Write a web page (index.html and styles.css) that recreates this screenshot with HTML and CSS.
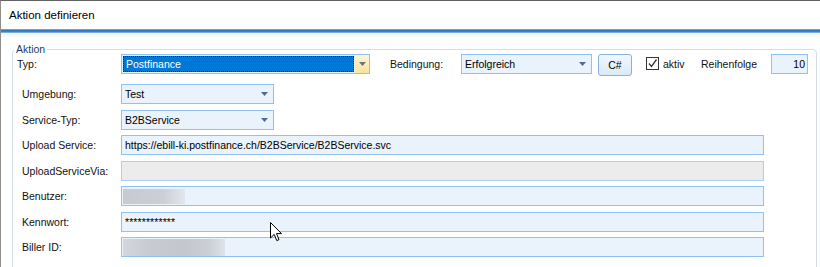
FILE: index.html
```html
<!DOCTYPE html>
<html lang="de">
  <head>
    <meta charset="utf-8">
    <title>Aktion definieren</title>
    <link rel="stylesheet" href="styles.css">
  </head>
  <body>
  <div class="window">
      <div class="titlebar">Aktion definieren</div>
      <div class="band"></div>

      <div class="content">
          <div class="group">
              <span class="legend">Aktion</span>

              <!-- erste Zeile: Typ, Bedingung, C#, aktiv, Reihenfolge -->
              <div class="row-top">
                  <span class="topic topic-typ">Typ:</span>
                  <div class="combo combo-typ">
                      <span class="selection">Postfinance</span>
                      <span class="combo-btn hot">
                          <svg width="7" height="4" viewBox="0 0 7 4"><polygon points="0,0 7,0 3.5,4" fill="#6a7488"/></svg>
                      </span>
                  </div>
                  <span class="topic topic-bed">Bedingung:</span>
                  <div class="combo combo-bed">
                      <span class="combo-text">Erfolgreich</span>
                      <span class="combo-btn">
                          <svg width="7" height="4" viewBox="0 0 7 4"><polygon points="0,0 7,0 3.5,4" fill="#4f6b94"/></svg>
                      </span>
                  </div>
                  <button class="cs-btn">C#</button>
                  <span class="check">
                      <svg width="11" height="11" viewBox="0 0 11 11"><polyline points="2,5.5 4.5,8.5 9.5,1.5" fill="none" stroke="#333" stroke-width="1.3"/></svg>
                  </span>
                  <span class="check-label">aktiv</span>
                  <span class="topic topic-order">Reihenfolge</span>
                  <div class="field field-order">10</div>
              </div>

              <div class="rows">
                  <div class="row">
                      <span class="topic">Umgebung:</span>
                      <div class="combo combo-small">
                          <span class="combo-text">Test</span>
                          <span class="combo-btn">
                              <svg width="7" height="4" viewBox="0 0 7 4"><polygon points="0,0 7,0 3.5,4" fill="#4f6b94"/></svg>
                          </span>
                      </div>
                  </div>
                  <div class="row">
                      <span class="topic">Service-Typ:</span>
                      <div class="combo combo-small">
                          <span class="combo-text">B2BService</span>
                          <span class="combo-btn">
                              <svg width="7" height="4" viewBox="0 0 7 4"><polygon points="0,0 7,0 3.5,4" fill="#4f6b94"/></svg>
                          </span>
                      </div>
                  </div>
                  <div class="row">
                      <span class="topic">Upload Service:</span>
                      <div class="field field-wide">https://ebill-ki.postfinance.ch/B2BService/B2BService.svc</div>
                  </div>
                  <div class="row">
                      <span class="topic">UploadServiceVia:</span>
                      <div class="field field-wide disabled"></div>
                  </div>
                  <div class="row">
                      <span class="topic">Benutzer:</span>
                      <div class="field field-wide field-blur"><span class="blur blur-user"></span></div>
                  </div>
                  <div class="row">
                      <span class="topic">Kennwort:</span>
                      <div class="field field-wide pw">************</div>
                  </div>
                  <div class="row">
                      <span class="topic">Biller ID:</span>
                      <div class="field field-wide field-blur"><span class="blur blur-biller"></span></div>
                  </div>
              </div>
          </div>
      </div>

      <!-- Mauszeiger -->
      <svg class="cursor" width="13" height="20" viewBox="0 0 13 20">
          <path d="M0.5,0.5 L0.5,16 L4.2,12.4 L6.8,18.6 L9,17.6 L6.5,11.6 L11.5,11.6 Z" fill="#fff" stroke="#000" stroke-width="1"/>
      </svg>
  </div>
  </body>
</html>
```

FILE: styles.css
```css
/* Grundeinstellungen */
body {
    margin: 0;
    width: 820px;
    height: 267px;
    overflow: hidden;
    font-family: "Liberation Sans", Arial, sans-serif;
    font-size: 10.5px;
    color: #111;
    background-color: #ffffff;
}

/* Fensterrahmen */
.window {
    position: relative;
    height: 267px;
    border-top: 1px solid #626262;
    border-left: 1px solid #8e8e8e;
    box-sizing: border-box;
}

/* Titelleiste */
.titlebar {
    height: 28px;
    line-height: 28px;
    padding-left: 8px;
    font-size: 11.5px;
    color: #000;
    background-color: #ffffff;
}

/* blaue Linie unter dem Titel */
.band {
    height: 4px;
    background: linear-gradient(#86b6e0, #2f76bb 40%, #3f84c6 70%, #a4c8e8);
}

.content {
    height: 234px;
    background: linear-gradient(#eef3f8, #ffffff 6px);
    overflow: hidden;
}

/* Gruppenrahmen "Aktion" */
.group {
    position: relative;
    margin: 16px 3px 0 11px;
    height: 260px;
    padding-top: 4px;
    border: 1px solid #d3dde6;
    border-radius: 4px 4px 0 0;
    box-sizing: border-box;
}

.legend {
    position: absolute;
    top: -8px;
    left: 1px;
    padding: 0 2px;
    line-height: 14px;
    color: #223d63;
    background-color: #ffffff;
}

/* erste Zeile */
.row-top {
    display: flex;
    align-items: flex-start;
    height: 22px;
    padding-left: 4px;
}

.topic {
    line-height: 20px;
    flex-shrink: 0;
    white-space: nowrap;
}
.topic-typ { width: 104px; }
.topic-bed { width: 71px; margin-left: 20px; }
.topic-order { width: 70px; }

/* Zeilen darunter */
.rows {
    display: grid;
    grid-auto-rows: 20px;
    row-gap: 5.5px;
    margin-top: 8px;
    padding-left: 9px;
}

.row {
    display: flex;
    align-items: center;
}
.row .topic { width: 99px; }

/* Kombinationsfelder */
.combo {
    display: flex;
    height: 20px;
    box-sizing: border-box;
    border: 1px solid #8fc1f3;
    background-color: #eaf2fb;
    flex-shrink: 0;
}
.combo-typ { width: 249px; }
.combo-bed { width: 131px; }
.combo-small { width: 153px; }

.combo-text {
    flex-grow: 1;
    padding-left: 3px;
    line-height: 18px;
    color: #000;
}

.combo-btn {
    width: 13px;
    display: flex;
    align-items: center;
    justify-content: center;
    padding-right: 2px;
}
.combo-btn.hot {
    width: 14px;
    padding-right: 0;
    background: linear-gradient(#fff5d6, #fbe39e);
}

/* markierter Eintrag mit Fokusrahmen */
.selection {
    flex-grow: 1;
    margin: 1px;
    padding-left: 2px;
    line-height: 14px;
    color: #ffffff;
    background-color: #0078d7;
    border: 1px dotted #2a2a2a;
}

/* C# Knopf */
.cs-btn {
    width: 34px;
    height: 22px;
    margin-left: 6px;
    padding: 0;
    font-family: inherit;
    font-size: 10.5px;
    color: #000;
    border: 1px solid #80b3e6;
    border-radius: 3px;
    background: linear-gradient(#f3f8fe, #dae9f9);
}

/* Kontrollkästchen */
.check {
    width: 13px;
    height: 13px;
    margin: 3px 4px 0 14px;
    box-sizing: border-box;
    border: 1px solid #333;
    background-color: #fff;
    display: flex;
    align-items: center;
    justify-content: center;
}
.check-label {
    width: 38px;
    line-height: 20px;
}

/* Textfelder */
.field {
    height: 20px;
    box-sizing: border-box;
    border: 1px solid #8fc1f3;
    background-color: #eaf2fb;
    padding: 0 3px;
    line-height: 18px;
    color: #000;
    flex-shrink: 0;
    white-space: nowrap;
}
.field-wide { width: 643px; }
.field-order {
    width: 37px;
    text-align: right;
    padding-right: 2px;
}
.field.disabled {
    background-color: #ececec;
    border-color: #a9cff4;
}
.field.pw {
    line-height: 19px;
    letter-spacing: 0.1px;
}

/* unkenntlich gemachte Werte */
.field-blur {
    display: flex;
    align-items: center;
    padding: 0 0 0 1px;
}
.blur {
    display: block;
}
.blur-user {
    width: 62px;
    height: 15px;
    background: linear-gradient(90deg, #c7cbd1, #ccd0d6 65%, #e2e7ed);
}
.blur-biller {
    width: 102px;
    height: 17px;
    background: linear-gradient(90deg, #d3d6da, #c8cbd0 25%, #c3c7cc 60%, #ccd0d5 85%, #dee3e9);
}

/* Mauszeiger liegt über dem Formular */
.cursor {
    position: absolute;
    left: 269px;
    top: 221px;
}
```
